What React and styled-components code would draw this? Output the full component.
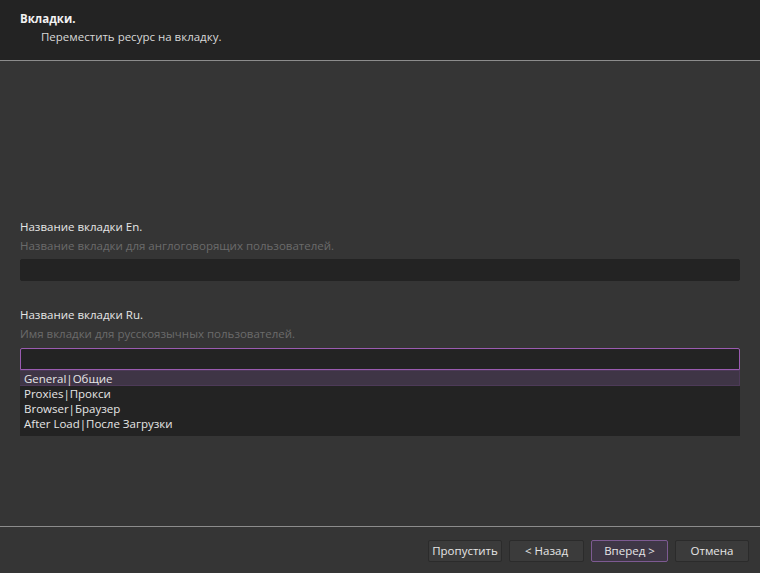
import React from "react";
import styled, { createGlobalStyle } from "styled-components";

const Global = createGlobalStyle`
  html, body { margin: 0; padding: 0; height: 100%; background: #353535; }
  #root { height: 100%; }
  * { box-sizing: border-box; }
`;

const Window = styled.div`
  width: 760px;
  height: 573px;
  display: flex;
  flex-direction: column;
  background: #353535;
  font-family: "Open Sans", "Noto Sans", sans-serif;
  font-size: 11.5px;
  color: #e2e2e2;
`;

const Header = styled.header`
  height: 61px;
  background: #232323;
  border-bottom: 1px solid #8c8c8c;
  padding: 11px 20px 0;
  display: flex;
  flex-direction: column;
  gap: 2px;
`;

const Title = styled.div`
  font-weight: 700;
  color: #f2f2f2;
  line-height: 16px;
`;

const Subtitle = styled.div`
  padding-left: 21px;
  color: #d8d8d8;
  line-height: 16px;
`;

const Main = styled.main`
  flex: 1;
  padding: 157px 20px 0;
  display: flex;
  flex-direction: column;
  gap: 25px;
`;

const Field = styled.div`
  display: flex;
  flex-direction: column;
`;

const Label = styled.div`
  line-height: 17px;
  color: #e6e6e6;
`;

const Hint = styled.div`
  line-height: 17px;
  margin-top: 2px;
  color: #6b6b6b;
`;

const Input = styled.div`
  margin-top: ${(p) => (p.$focused ? "6px" : "5px")};
  height: 22px;
  background: #232323;
  border: 1px solid ${(p) => (p.$focused ? "#9a5bb0" : "#232323")};
  border-radius: ${(p) => (p.$focused ? "2px 2px 0 0" : "2px")};
`;

const List = styled.div`
  background: #232323;
  height: 66px;
  display: flex;
  flex-direction: column;
`;

const Item = styled.div`
  line-height: 15px;
  padding-left: 4px;
  color: #e6e6e6;
  background: ${(p) => (p.$active ? "#3f3546" : "transparent")};
  border: 1px solid ${(p) => (p.$active ? "#4d3a58" : "transparent")};
  border-left: none;
  display: flex;
  align-items: center;
  height: ${(p) => (p.$active ? "16px" : "15px")};
`;

const Footer = styled.footer`
  height: 47px;
  border-top: 1px solid #8c8c8c;
  display: flex;
  justify-content: flex-end;
  align-items: flex-start;
  padding: 13px 11px 0 0;
  gap: 7px;
`;

const Button = styled.button`
  height: 22px;
  width: ${(p) => p.$w}px;
  background: ${(p) => (p.$primary ? "#3f3746" : "#3b3b3b")};
  border: 1px solid ${(p) => (p.$primary ? "#7d5a92" : "#2b2b2b")};
  border-radius: 2px;
  color: #e6e6e6;
  font-family: inherit;
  font-size: 11.5px;
  padding: 0;
  line-height: 20px;
`;

const items = [
  "General|Общие",
  "Proxies|Прокси",
  "Browser|Браузер",
  "After Load|После Загрузки",
];

export default function App() {
  return (
    <>
      <Global />
      <Window>
        <Header>
          <Title>Вкладки.</Title>
          <Subtitle>Переместить ресурс на вкладку.</Subtitle>
        </Header>
        <Main>
          <Field>
            <Label>Название вкладки En.</Label>
            <Hint>Название вкладки для англоговорящих пользователей.</Hint>
            <Input />
          </Field>
          <Field>
            <Label>Название вкладки Ru.</Label>
            <Hint>Имя вкладки для русскоязычных пользователей.</Hint>
            <Input $focused />
            <List>
              {items.map((t, i) => (
                <Item key={t} $active={i === 0}>{t}</Item>
              ))}
            </List>
          </Field>
        </Main>
        <Footer>
          <Button $w={74}>Пропустить</Button>
          <Button $w={75}>&lt; Назад</Button>
          <Button $w={77} $primary>Вперед &gt;</Button>
          <Button $w={74}>Отмена</Button>
        </Footer>
      </Window>
    </>
  );
}
